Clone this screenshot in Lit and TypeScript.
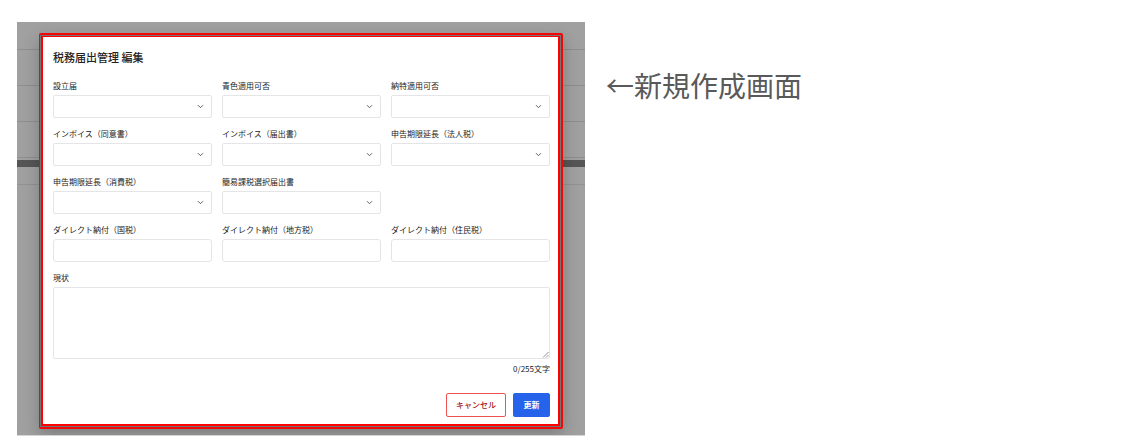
import { LitElement, html, css } from "lit";
import { customElement, state } from "lit/decorators.js";

type Field = { id: string; label: string; kind: "select" | "text" };

const FIELDS: Field[][] = [
  [
    { id: "establishment", label: "設立届", kind: "select" },
    { id: "blue", label: "青色適用可否", kind: "select" },
    { id: "special", label: "納特適用可否", kind: "select" },
  ],
  [
    { id: "invoice-consent", label: "インボイス（同意書）", kind: "select" },
    { id: "invoice-notice", label: "インボイス（届出書）", kind: "select" },
    { id: "extension-corporate", label: "申告期限延長（法人税）", kind: "select" },
  ],
  [
    { id: "extension-consumption", label: "申告期限延長（消費税）", kind: "select" },
    { id: "simplified", label: "簡易課税選択届出書", kind: "select" },
  ],
  [
    { id: "direct-national", label: "ダイレクト納付（国税）", kind: "text" },
    { id: "direct-local", label: "ダイレクト納付（地方税）", kind: "text" },
    { id: "direct-resident", label: "ダイレクト納付（住民税）", kind: "text" },
  ],
];

const MAX_LENGTH = 255;

@customElement("tax-dialog")
class TaxDialog extends LitElement {
  @state() private count = 0;

  static styles = css`
    :host {
      display: block;
      background: #747474;
      border: 2px solid #f40606;
      border-left-width: 1px;
      border-radius: 2px;
      padding: 1px;
      box-shadow: 0 6px 16px rgba(0, 0, 0, 0.22);
    }
    * {
      box-sizing: border-box;
    }
    .panel {
      background: #fff;
      border: 2px solid #fe0000;
      border-top-width: 1px;
      padding: 12px 8px 7px 10px;
      color: #222;
      font-size: 8px;
      line-height: 14px;
    }
    .title {
      margin: 0 0 14px;
      font-size: 11px;
      line-height: 16px;
      font-weight: 500;
    }
    .fields {
      display: grid;
      grid-template-columns: repeat(3, 1fr);
      gap: 9px 10px;
    }
    .row {
      display: contents;
    }
    .field {
      display: flex;
      flex-direction: column;
      gap: 2px;
      min-width: 0;
    }
    .first {
      grid-column-start: 1;
    }
    .wide {
      grid-column: 1 / -1;
    }
    label {
      display: block;
    }
    .control {
      display: grid;
    }
    .control > * {
      grid-area: 1 / 1;
    }
    select,
    input,
    textarea {
      appearance: none;
      display: block;
      width: 100%;
      margin: 0;
      padding: 3px 6px;
      font: inherit;
      color: inherit;
      background: #fff;
      border: 1px solid #e5e5e7;
      border-radius: 2px;
      outline: none;
    }
    select,
    input {
      height: 23px;
    }
    input {
      border-radius: 3px;
    }
    textarea {
      height: 72px;
      resize: none;
    }
    .chevron {
      align-self: center;
      justify-self: end;
      width: 7px;
      height: 7px;
      margin-right: 8px;
      pointer-events: none;
    }
    .grip {
      align-self: end;
      justify-self: end;
      width: 7px;
      height: 7px;
      margin: 1px;
      pointer-events: none;
    }
    .counter {
      margin-top: 1px;
      text-align: right;
    }
    .actions {
      display: flex;
      justify-content: flex-end;
      gap: 7px;
      margin-top: 17px;
    }
    button {
      height: 24px;
      min-width: 37px;
      padding: 0 9px;
      border: 1px solid #ee5252;
      border-radius: 2px;
      background: #fff;
      color: #a61b1b;
      font: inherit;
      font-weight: 500;
    }
    .primary {
      border-color: #2563eb;
      background: #2563eb;
      color: #fff;
      font-weight: 700;
    }
  `;

  private onInput(e: Event) {
    this.count = (e.target as HTMLTextAreaElement).value.length;
  }

  private field(f: Field, first: boolean) {
    return html`<div class="field ${first ? "first" : ""}">
      <label for=${f.id}>${f.label}</label>
      <div class="control">
        ${f.kind === "select"
          ? html`<select id=${f.id}>
                <option value=""></option>
              </select>
              <svg class="chevron" viewBox="0 0 7 7" aria-hidden="true">
                <path d="M1 2.2 3.5 4.7 6 2.2" fill="none" stroke="#5c6068" stroke-width="1" />
              </svg>`
          : html`<input id=${f.id} type="text" />`}
      </div>
    </div>`;
  }

  render() {
    return html`<form class="panel" role="dialog" aria-labelledby="title">
      <h2 class="title" id="title">税務届出管理 編集</h2>
      <div class="fields">
        ${FIELDS.map((row) => html`<div class="row">${row.map((f, i) => this.field(f, i === 0))}</div>`)}
        <div class="field wide">
          <label for="status">現状</label>
          <div class="control">
            <textarea id="status" maxlength=${MAX_LENGTH} @input=${this.onInput}></textarea>
            <svg class="grip" viewBox="0 0 7 7" aria-hidden="true">
              <path d="M1 6.5 6.5 1M4 6.5 6.5 4" fill="none" stroke="#777" stroke-width="0.8" />
            </svg>
          </div>
          <div class="counter">${this.count}/${MAX_LENGTH}文字</div>
        </div>
      </div>
      <div class="actions">
        <button type="button">キャンセル</button>
        <button type="button" class="primary">更新</button>
      </div>
    </form>`;
  }
}

@customElement("app-root")
class AppRoot extends LitElement {
  static styles = css`
    :host {
      display: block;
      font-family: "Noto Sans CJK JP", sans-serif;
      background: #fff;
    }
    * {
      box-sizing: border-box;
    }
    .page {
      display: grid;
      grid-template-columns: 568fr 516fr;
      column-gap: 21px;
      align-items: start;
      padding: 22px 0 8px 17px;
    }
    .screen {
      display: grid;
      overflow: hidden;
      background: #a0a0a0;
      border-bottom: 1px solid #d4d4d4;
    }
    .screen > * {
      grid-area: 1 / 1;
    }
    .line {
      height: 36px;
      border-bottom: 1px solid #8e8e8e;
    }
    .line:first-child {
      height: 28px;
    }
    .band {
      height: 7px;
      margin-top: 2px;
      background: #555;
    }
    .tail {
      height: 18px;
      border-bottom: 1px solid #929292;
    }
    .dialog {
      margin: 11px 22px 6px;
    }
    .note {
      margin: 43px 0 0;
      color: #595959;
      font-size: 28px;
      line-height: 40px;
      font-weight: 400;
    }
  `;

  render() {
    return html`<main class="page">
      <section class="screen">
        <div>
          <div class="line"></div>
          <div class="line"></div>
          <div class="line"></div>
          <div class="line"></div>
          <div class="band"></div>
          <div class="tail"></div>
        </div>
        <tax-dialog class="dialog"></tax-dialog>
      </section>
      <p class="note">←新規作成画面</p>
    </main>`;
  }
}
